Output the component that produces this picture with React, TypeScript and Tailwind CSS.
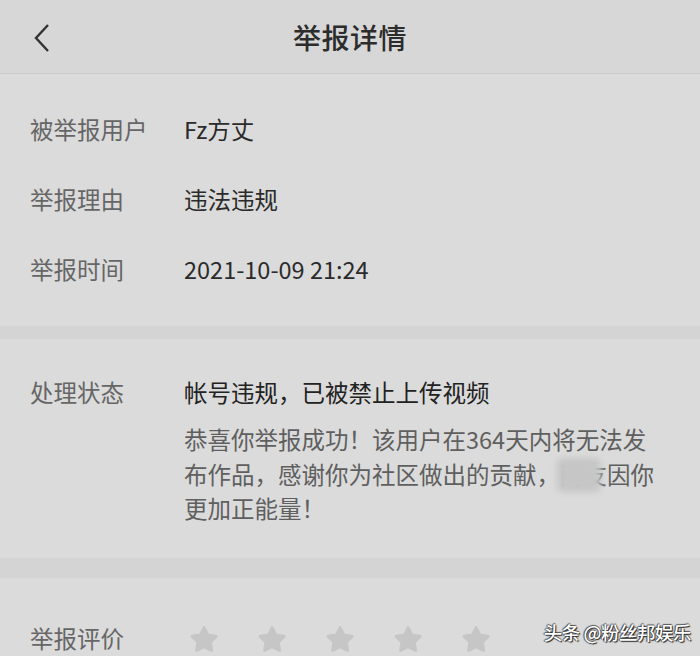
const rows = [
  { label: "被举报用户", value: "Fz方丈" },
  { label: "举报理由", value: "违法违规" },
  { label: "举报时间", value: "2021-10-09 21:24" },
];

function Star() {
  return (
    <svg width="32" height="30" viewBox="0 0 24 23" className="shrink-0">
      <path
        d="M12 1.6c.5 0 .9.3 1.1.7l2.6 5.2 5.7.8c1 .1 1.4 1.3.7 2l-4.1 4 1 5.7c.2 1-.9 1.7-1.7 1.2L12 18.5l-5.1 2.7c-.9.5-1.9-.3-1.7-1.2l1-5.7-4.1-4c-.7-.7-.3-1.9.7-2l5.7-.8 2.6-5.2c.2-.4.6-.7.9-.7z"
        fill="#c6c6c6"
      />
    </svg>
  );
}

export default function App() {
  return (
    <div
      className="relative w-[700px] h-[656px] overflow-hidden bg-[#dadada] text-[23.5px]"
      style={{ fontFamily: '"Noto Sans CJK SC", "Noto Sans", sans-serif' }}
    >
      {/* header */}
      <div className="relative flex items-center justify-center h-[74px] bg-[#d7d7d7] border-b border-[#c9c9c9]">
        <svg
          width="20"
          height="32"
          viewBox="0 0 20 32"
          className="absolute left-[32px] top-[22px]"
        >
          <polyline points="16,3 4,16 16,29" fill="none" stroke="#333" strokeWidth="2.4" />
        </svg>
        <h1 className="text-[28px] font-medium text-[#2c2c2c] tracking-[0.5px]">举报详情</h1>
      </div>

      {/* basic info */}
      <div className="py-[21px] bg-[#dbdbdb]">
        {rows.map((r) => (
          <div key={r.label} className="flex items-center h-[70px] pl-[30px]">
            <span className="w-[154px] text-[#666]">{r.label}</span>
            <span className="text-[#2b2b2b]">{r.value}</span>
          </div>
        ))}
      </div>

      <div className="h-[13px] bg-[#d4d4d4]" />

      {/* result */}
      <div className="flex pl-[30px] pt-[36px] pb-[32px] bg-[#dbdbdb]">
        <span className="w-[154px] shrink-0 leading-[34px] text-[#666]">处理状态</span>
        <div>
          <p className="leading-[34px] text-[#222]">帐号违规，已被禁止上传视频</p>
          <p className="mt-[13px] leading-[34.5px] text-[#5f5f5f]">
            恭喜你举报成功！该用户在364天内将无法发
            <br />
            布作品，感谢你为社区做出的贡献，
            <span className="relative">
              网友
              <span className="absolute left-[-3px] top-[1px] w-[44px] h-[34px] rounded-md bg-[#c6c6c6] blur-[3px]" />
            </span>
            因你
            <br />
            更加正能量！
          </p>
        </div>
      </div>

      <div className="h-[20px] bg-[#d4d4d4]" />

      {/* rating */}
      <div className="pt-[26px] bg-[#dbdbdb]">
        <div className="flex items-center h-[70px] pl-[30px]">
          <span className="w-[158px] text-[#666]">举报评价</span>
          <div className="flex items-center gap-[36px]">
            <Star />
            <Star />
            <Star />
            <Star />
            <Star />
          </div>
        </div>
      </div>

      {/* watermark */}
      <div
        className="absolute right-[9px] top-[619px] text-[18.5px] font-medium text-white tracking-[-0.5px]"
        style={{ textShadow: "1px 1px 1px #222, -1px 0 1px #444, 0 -1px 1px #555" }}
      >
        头条 @粉丝邦娱乐
      </div>
    </div>
  );
}
